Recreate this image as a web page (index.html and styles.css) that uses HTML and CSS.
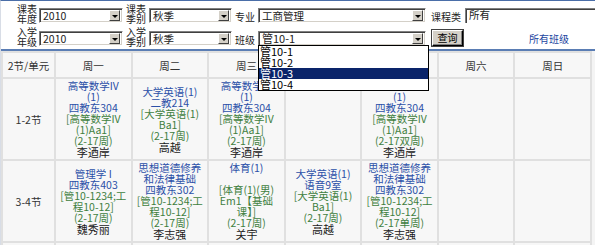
FILE: index.html
```html
<!DOCTYPE html>
<html>
<head>
    <title>课表查询</title>
    <link rel="stylesheet" href="styles.css">
</head>
<body>
    <div class="page">
        <div class="filters">
            <div class="label">课表<br>年度</div>
            <div class="combo w-year"><span class="value">2010</span><span class="arrow"></span></div>
            <div class="label">课表<br>季别</div>
            <div class="combo w-term"><span class="value">秋季</span><span class="arrow"></span></div>
            <div class="label single">专业</div>
            <div class="combo w-major"><span class="value">工商管理</span><span class="arrow"></span></div>
            <div class="label single">课程类</div>
            <div class="textbox">所有</div>

            <div class="label">入学<br>年级</div>
            <div class="combo w-year"><span class="value">2010</span><span class="arrow"></span></div>
            <div class="label">入学<br>季别</div>
            <div class="combo w-term"><span class="value">秋季</span><span class="arrow"></span></div>
            <div class="label single">班级</div>
            <div class="combo w-major open">
                <span class="value big">管10-1</span><span class="arrow"></span>
                <ul class="options">
                    <li>管10-1</li>
                    <li>管10-2</li>
                    <li class="selected">管10-3</li>
                    <li>管10-4</li>
                </ul>
            </div>
            <div class="cell-btn"><button type="button" class="query">查询</button></div>
            <div class="cell-link"><a href="#" class="all-classes">所有班级</a></div>
        </div>

        <div class="schedule">
            <table>
                <colgroup>
                    <col class="c-unit">
                    <col><col><col><col><col><col><col>
                </colgroup>
                <tr class="head">
                    <th>2节/单元</th>
                    <th>周一</th>
                    <th>周二</th>
                    <th>周三</th>
                    <th>周四</th>
                    <th>周五</th>
                    <th>周六</th>
                    <th>周日</th>
                </tr>
                <tr class="slot-row">
                    <td class="unit">1-2节</td>
                    <td>
                        <span class="course">高等数学IV<br>(1)</span>
                        <span class="course">四教东304</span>
                        <span class="detail">[高等数学IV<br>(1)Aa1]<br>(2-17周)</span>
                        <span class="teacher">李迺岸</span>
                    </td>
                    <td>
                        <span class="course">大学英语(1)</span>
                        <span class="course">二教214</span>
                        <span class="detail">[大学英语(1)<br>Ba1]<br>(2-17周)</span>
                        <span class="teacher">高越</span>
                    </td>
                    <td>
                        <span class="course">高等数学IV<br>(1)</span>
                        <span class="course">四教东304</span>
                        <span class="detail">[高等数学IV<br>(1)Aa1]<br>(2-17周)</span>
                        <span class="teacher">李迺岸</span>
                    </td>
                    <td></td>
                    <td>
                        <span class="course">高等数学IV<br>(1)</span>
                        <span class="course">四教东304</span>
                        <span class="detail">[高等数学IV<br>(1)Aa1]<br>(2-17双周)</span>
                        <span class="teacher">李迺岸</span>
                    </td>
                    <td></td>
                    <td></td>
                </tr>
                <tr class="slot-row">
                    <td class="unit">3-4节</td>
                    <td>
                        <span class="course">管理学 I</span>
                        <span class="course">四教东403</span>
                        <span class="detail">[管10-1234;工<br>程10-12]<br>(2-17周)</span>
                        <span class="teacher">魏秀丽</span>
                    </td>
                    <td>
                        <span class="course">思想道德修养<br>和法律基础</span>
                        <span class="course">四教东302</span>
                        <span class="detail">[管10-1234;工<br>程10-12]<br>(2-17周)</span>
                        <span class="teacher">李志强</span>
                    </td>
                    <td>
                        <span class="course">体育(1)</span>
                        <span class="course">&nbsp;</span>
                        <span class="detail">[体育(1)(男)<br>Em1【基础<br>课】]<br>(2-17周)</span>
                        <span class="teacher">关宇</span>
                    </td>
                    <td>
                        <span class="course">大学英语(1)</span>
                        <span class="course">语音9室</span>
                        <span class="detail">[大学英语(1)<br>Ba1]<br>(2-17周)</span>
                        <span class="teacher">高越</span>
                    </td>
                    <td>
                        <span class="course">思想道德修养<br>和法律基础</span>
                        <span class="course">四教东302</span>
                        <span class="detail">[管10-1234;工<br>程10-12]<br>(2-17单周)</span>
                        <span class="teacher">李志强</span>
                    </td>
                    <td></td>
                    <td></td>
                </tr>
                <tr class="slot-row">
                    <td class="unit">5-6节</td>
                    <td></td><td></td><td></td><td></td><td></td><td></td><td></td>
                </tr>
            </table>
        </div>
    </div>
</body>
</html>
```

FILE: styles.css
```css
html, body {
    margin: 0;
    overflow: hidden;
}
body {
    font-family: "Noto Sans CJK SC", sans-serif;
    font-size: 10px;
    color: #222;
    background: #fff;
}
.page {
    border-top: 1px solid #4a6ea8;
    border-left: 1px solid #d8dde6;
}
.filters {
    display: grid;
    grid-template-columns: 22px 87px 23px 86px 23px 173px 34px 160px;
    grid-template-rows: 20px 20px;
    row-gap: 3px;
    padding: 3px 0 0 16px;
    align-items: end;
}
.label {
    line-height: 10px;
    font-size: 10px;
    color: #222;
}
.label.single {
    line-height: 15px;
    margin-bottom: 0;
}
.combo {
    position: relative;
    box-sizing: border-box;
    height: 15px;
    display: flex;
    align-items: center;
    background: #fff;
    border-top: 1px solid #808080;
    border-left: 1px solid #808080;
    border-right: 1px solid #fff;
    border-bottom: 1px solid #fff;
    box-shadow: inset 1px 1px 0 #404040, inset -1px -1px 0 #d4d0c8;
}
.w-year { width: 84px; }
.w-term { width: 83px; }
.w-major { width: 168px; }
.value {
    padding-left: 3px;
    font-size: 10.5px;
    line-height: 13px;
    white-space: nowrap;
}
.value.big {
    font-size: 11px;
}
.arrow {
    margin-left: auto;
    margin-right: 2px;
    box-sizing: border-box;
    width: 11px;
    height: 11px;
    background: #d4d0c8;
    border-top: 1px solid #fff;
    border-left: 1px solid #fff;
    border-right: 1px solid #404040;
    border-bottom: 1px solid #404040;
    display: flex;
    align-items: center;
    justify-content: center;
}
.arrow::after {
    content: "";
    border-left: 3px solid transparent;
    border-right: 3px solid transparent;
    border-top: 3px solid #000;
    margin-top: 1px;
}
.options {
    position: absolute;
    top: 13px;
    left: -1px;
    width: 171px;
    box-sizing: border-box;
    margin: 0;
    padding: 0;
    list-style: none;
    background: #fff;
    border: 1px solid #000;
    z-index: 5;
}
.options li {
    height: 11px;
    line-height: 11px;
    font-size: 11px;
    padding-left: 1px;
    color: #000;
}
.options li.selected {
    background: #0a246a;
    color: #fff;
}
.textbox {
    box-sizing: border-box;
    height: 15px;
    width: 160px;
    margin-bottom: 1px;
    padding-left: 3px;
    font-size: 10.5px;
    line-height: 12px;
    background: #fff;
    border-top: 1px solid #808080;
    border-left: 1px solid #808080;
    box-shadow: inset 1px 1px 0 #404040;
}
.filters > .combo {
    margin-bottom: 1px;
}
.cell-btn {
    margin-bottom: 1px;
}
.query {
    box-sizing: border-box;
    width: 31px;
    height: 16px;
    padding: 0;
    font-family: inherit;
    font-size: 10px;
    line-height: 12px;
    color: #000;
    background: #d4d0c8;
    border-top: 1px solid #fff;
    border-left: 1px solid #fff;
    border-right: 1px solid #000;
    border-bottom: 1px solid #000;
    box-shadow: inset -1px -1px 0 #808080, 0 0 0 1px #404040;
    margin-left: 1px;
}
.cell-link {
    align-self: center;
    padding-left: 64px;
    padding-top: 3px;
}
.all-classes {
    color: #2145a0;
    text-decoration: none;
    font-size: 10px;
}
.schedule {
    margin-top: 2px;
    border-top: 2px solid #5a7db4;
    background: #f4f4f4;
    height: 200px;
}
table {
    width: 591px;
    table-layout: fixed;
    border-collapse: collapse;
}
col.c-unit {
    width: 53px;
}
th, td {
    border: 2px solid #e0e0e0;
    background: #f7f7f7;
    text-align: center;
    vertical-align: middle;
    padding: 0 1px;
    font-size: 10.5px;
    font-weight: normal;
    line-height: 11px;
}
.head th {
    height: 24px;
    color: #333;
}
.slot-row td {
    height: 80px;
}
.unit {
    color: #333;
}
.course, .detail, .teacher {
    display: block;
    white-space: nowrap;
}
.course {
    color: #2b50a8;
}
.detail {
    color: #3f7f3f;
}
.teacher {
    color: #1a1a1a;
    font-size: 11px;
    line-height: 12px;
}
```
